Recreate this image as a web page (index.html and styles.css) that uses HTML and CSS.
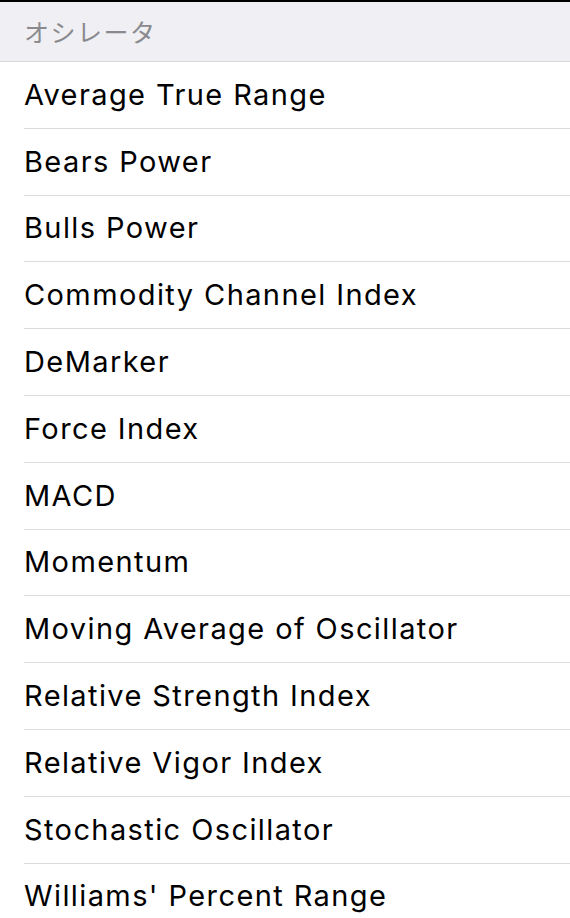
FILE: index.html
```html
<!DOCTYPE html>
<html lang="ja">
<head>
<meta charset="utf-8">
<link rel="stylesheet" href="styles.css">
</head>
<body>
<div class="screen">
  <div class="section-header">オシレータ</div>
  <ul class="list">
    <li class="row">Average True Range</li>
    <li class="row">Bears Power</li>
    <li class="row">Bulls Power</li>
    <li class="row">Commodity Channel Index</li>
    <li class="row">DeMarker</li>
    <li class="row">Force Index</li>
    <li class="row">MACD</li>
    <li class="row">Momentum</li>
    <li class="row">Moving Average of Oscillator</li>
    <li class="row">Relative Strength Index</li>
    <li class="row">Relative Vigor Index</li>
    <li class="row">Stochastic Oscillator</li>
    <li class="row">Williams' Percent Range</li>
  </ul>
</div>
</body>
</html>
```
FILE: styles.css
```css
html, body {
  margin: 0;
  padding: 0;
  background: #ffffff;
}
.screen {
  width: 570px;
  height: 918px;
  overflow: hidden;
  border-top: 2px solid #000;
  box-sizing: border-box;
  font-family: Inter, "Noto Sans CJK JP", sans-serif;
}
.section-header {
  box-sizing: border-box;
  height: 60px;
  background: #efeff4;
  border-bottom: 1px solid #d8d8dc;
  padding-left: 24px;
  padding-bottom: 2px;
  display: flex;
  align-items: center;
  color: #8a8a8e;
  font-size: 25px;
  letter-spacing: 1.5px;
  font-family: "Noto Sans CJK JP", sans-serif;
}
.list {
  list-style: none;
  margin: 0;
  padding: 0 0 0 24px;
}
.row {
  height: 66.8px;
  box-sizing: border-box;
  border-bottom: 1px solid #dcdcdf;
  display: flex;
  align-items: center;
  font-size: 29px;
  letter-spacing: 1.4px;
  color: #000;
  padding-bottom: 1px;
}
```
